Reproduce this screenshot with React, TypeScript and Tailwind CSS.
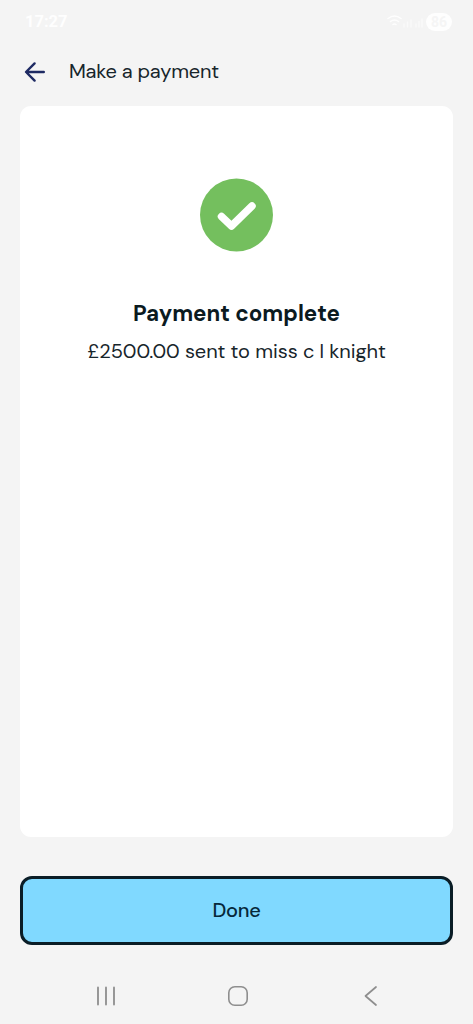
function StatusBar() {
  return (
    <div className="flex h-11 shrink-0 items-center justify-between pl-[25px] pr-[21px] text-[#fefefe]">
      <span className="font-[Roboto,sans-serif] text-[16.5px] font-bold leading-none">17:27</span>
      <div className="flex items-center gap-[3px]">
        <svg className="h-[14px] w-[36px]" viewBox="0 0 36 14" fill="none" stroke="currentColor" strokeWidth="1.5" strokeLinecap="round">
          <path d="M1 3.5c4-3 9-3 13 0M3.5 6.5c2.5-2 5.5-2 8 0M6 9.5c1-.8 2-.8 3 0" />
          <path d="M17 12v-3M20.5 12V7M24 12V5M29 12V9M32 12V6.5M35 12V4" opacity=".6" />
        </svg>
        <span className="flex h-[18px] w-[26px] items-center justify-center rounded-full bg-[#fefefe] font-[Roboto,sans-serif] text-[14px] font-bold leading-none text-[#f5f5f5]">
          86
        </span>
      </div>
    </div>
  );
}

function Header() {
  return (
    <header className="flex h-[62px] shrink-0 items-start pl-6 pt-4">
      <button aria-label="Back" className="mt-px h-[22px] w-[22px]">
        <svg className="h-[22px] w-[22px]" viewBox="0 0 22 22" fill="none" stroke="#1e2a63" strokeWidth="2.4" strokeLinecap="round" strokeLinejoin="round">
          <path d="M19.8 11H2.2M10.6 2.4L2 11l8.6 8.6" />
        </svg>
      </button>
      <h1 className="ml-[23px] whitespace-nowrap text-[20px] leading-[23px] tracking-[-0.2px] text-[#17252b]">Make a payment</h1>
    </header>
  );
}

function NavBar() {
  return (
    <nav className="flex h-[57px] shrink-0 items-center pl-[95px] text-[#8e8e8e]">
      <svg className="h-[22px] w-[22px]" viewBox="0 0 22 22" fill="none" stroke="currentColor" strokeWidth="1.8" strokeLinecap="round">
        <path d="M3 2.5v17M11 2.5v17M19 2.5v17" />
      </svg>
      <svg className="ml-[110px] h-[22px] w-[22px]" viewBox="0 0 22 22" fill="none" stroke="currentColor" strokeWidth="1.6">
        <rect x="1.8" y="1.8" width="18.4" height="18.4" rx="6" />
      </svg>
      <svg className="ml-[114px] h-[22px] w-[16px]" viewBox="0 0 16 22" fill="none" stroke="currentColor" strokeWidth="1.7" strokeLinecap="round" strokeLinejoin="round">
        <path d="M13 2L2.5 11 13 20" />
      </svg>
    </nav>
  );
}

export default function App() {
  return (
    <div className="flex h-screen w-full flex-col overflow-hidden bg-[#f4f4f4] font-['DM_Sans',Inter,sans-serif]">
      <StatusBar />
      <Header />

      <main className="mx-5 flex h-[731px] shrink-0 flex-col items-center rounded-[11px] bg-white pt-[72px]">
        <svg className="h-[74px] w-[74px]" viewBox="0 0 74 74" fill="none">
          <circle cx="36.5" cy="37" r="36.5" fill="#74bf5e" />
          <path d="M21.5 38.5L31.5 48 52 28" stroke="#fff" strokeWidth="7.5" strokeLinecap="round" strokeLinejoin="round" />
        </svg>
        <h2 className="mt-[47px] whitespace-nowrap text-[22.3px] font-bold leading-[30px] text-[#0b1a1f]">Payment complete</h2>
        <p className="mt-2 whitespace-nowrap text-[20px] leading-[28px] tracking-[-0.06px] text-[#17252b]">£2500.00 sent to miss c l knight</p>
      </main>

      <button className="mx-5 mt-[39px] h-[69px] shrink-0 rounded-[12px] border-3 border-[#0a1d26] bg-[#80d9ff] pb-0.5 text-[20px] font-medium tracking-[-0.3px] text-[#06283a]">
        Done
      </button>

      <div className="flex-1" />
      <NavBar />
    </div>
  );
}
